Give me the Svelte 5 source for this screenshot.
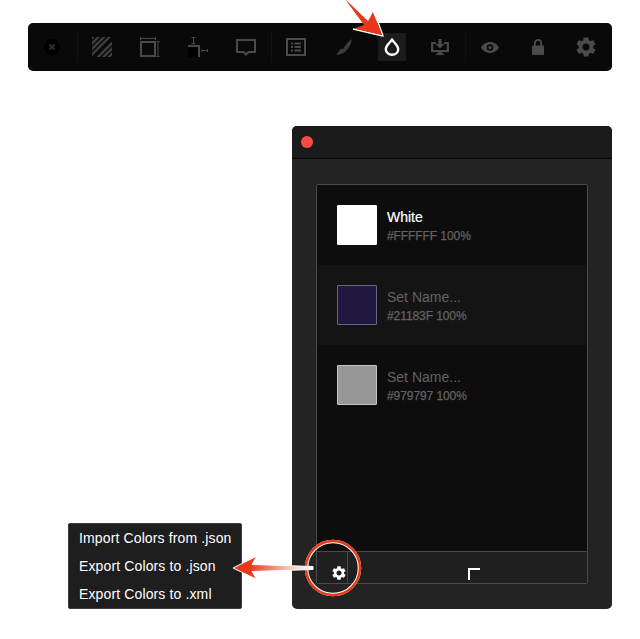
<script>
  const gear = "M19.14 12.94c.04-.3.06-.61.06-.94 0-.32-.02-.64-.07-.94l2.03-1.58c.18-.14.23-.41.12-.61l-1.92-3.32c-.12-.22-.37-.29-.59-.22l-2.39.96c-.5-.38-1.03-.7-1.62-.94l-.36-2.54c-.04-.24-.24-.41-.48-.41h-3.84c-.24 0-.43.17-.47.41l-.36 2.54c-.59.24-1.13.57-1.62.94l-2.39-.96c-.22-.08-.47 0-.59.22L2.74 8.87c-.12.21-.08.47.12.61l2.03 1.58c-.05.3-.09.63-.09.94s.02.64.07.94l-2.03 1.58c-.18.14-.23.41-.12.61l1.92 3.32c.12.22.37.29.59.22l2.39-.96c.5.38 1.03.7 1.62.94l.36 2.54c.05.24.24.41.48.41h3.84c.24 0 .44-.17.47-.41l.36-2.54c.59-.24 1.13-.56 1.62-.94l2.39.96c.22.08.47 0 .59-.22l1.92-3.32c.12-.22.07-.47-.12-.61l-2.01-1.58zM12 15.6c-1.98 0-3.6-1.62-3.6-3.6s1.62-3.6 3.6-3.6 3.6 1.62 3.6 3.6-1.62 3.6-3.6 3.6z";
  const colors = [
    { name: "White", named: true, hex: "#FFFFFF", pct: "100%", border: "#ffffff" },
    { name: "Set Name...", named: false, hex: "#21183F", pct: "100%", border: "#6a6480" },
    { name: "Set Name...", named: false, hex: "#979797", pct: "100%", border: "#c4c4c4" }
  ];
  const menu = ["Import Colors from .json", "Export Colors to .json", "Export Colors to .xml"];
</script>

<div class="page">
  <div class="toolbar">
    <div class="tool">
      <svg width="16" height="16" viewBox="0 0 16 16"><circle cx="8" cy="8" r="8" fill="#000"/><path d="M5.500 5.500l5 5M10.500 5.500l-5 5" stroke="#2e2e2e" stroke-width="2"/></svg>
    </div>
    <div class="sep"></div>
    <div class="tool">
      <svg width="20" height="20" viewBox="0 0 20 20">
        <defs><clipPath id="sq"><rect width="20" height="20"/></clipPath></defs>
        <g clip-path="url(#sq)" stroke="#3e3e3e" stroke-width="2.400">
          <path d="M-3 4L4 -3M-3 9.500L9.500 -3M-3 15L15 -3M-3 20.500L20.500 -3M2 24L24 2M7.500 24L24 7.500M13 24L24 13M18.500 24L24 18.500"/>
        </g>
      </svg>
    </div>
    <div class="tool">
      <svg width="20" height="20" viewBox="0 0 20 20" fill="none" stroke="#4a4a4a">
        <rect x="1" y="5" width="14" height="14" stroke-width="2"/>
        <path d="M.5 0V3M.5 1.500H15.500M15.500 0V3M16.500 4.500H19.500M18 4.500V19.500M16.500 19.500H19.500"/>
      </svg>
    </div>
    <div class="tool">
      <svg width="20" height="20" viewBox="0 0 20 20" fill="none" stroke="#4a4a4a">
        <rect x="0" y="8" width="11" height="12" fill="#000" stroke="none"/>
        <path d="M0 9H11V20" stroke-width="2"/>
        <path d="M3.500 .5H7.500M5.500 .5V6.500M3.500 6.500H7.500M14 12V15M14 13.500H19.500M19.500 12V15"/>
      </svg>
    </div>
    <div class="tool">
      <svg width="20" height="17" viewBox="0 0 20 17" fill="none" stroke="#4a4a4a" stroke-width="2">
        <path d="M1 1H19V13H12.500L10 15.500L7.500 13H1Z"/>
      </svg>
    </div>
    <div class="sep"></div>
    <div class="tool">
      <svg width="20" height="18" viewBox="0 0 20 18" fill="none" stroke="#4a4a4a">
        <rect x="1" y="1" width="18" height="16" stroke-width="2"/>
        <path d="M5 5.500H7M5 9H7M5 12.500H7M8.500 5.500H15M8.500 9H15M8.500 12.500H15" stroke-width="1.800"/>
      </svg>
    </div>
    <div class="tool">
      <svg width="16" height="16" viewBox="0 0 16 16" fill="#3c3c3c"><path d="M15.500 0C15.500 5 12.500 10.500 8 13.500C5.500 15 2.500 16 0 16C1.500 14 3.500 11.500 5 9.500L7 10.500C8.500 7 12 2.500 15.500 0Z"/></svg>
    </div>
    <div class="tool active">
      <svg width="16" height="18" viewBox="0 0 16 18" fill="none" stroke="#fff" stroke-width="2.400"><path d="M8 1.800C6.500 4 1.800 7.400 1.800 11.200C1.800 14.400 4.500 16.700 8 16.700C11.500 16.700 14.200 14.400 14.200 11.200C14.200 7.400 9.500 4 8 1.800Z"/></svg>
    </div>
    <div class="tool">
      <svg width="18" height="16" viewBox="0 0 18 16" fill="#4a4a4a"><path d="M1 3H5V5H2.200V11H15.800V5H13V3H17C17.600 3 18 3.400 18 4V12C18 12.600 17.600 13 17 13H11V14.500H13V16H5V14.500H7V13H1C.4 13 0 12.600 0 12V4C0 3.400.4 3 1 3Z"/><path d="M7.500 0H10.500V5H13.500L9 9.500L4.500 5H7.500Z"/></svg>
    </div>
    <div class="sep"></div>
    <div class="tool">
      <svg width="18" height="11" viewBox="0 0 18 11"><path fill="#4a4a4a" fill-rule="evenodd" d="M9 0C13 0 16.500 2.500 18 5.500C16.500 8.500 13 11 9 11C5 11 1.500 8.500 0 5.500C1.500 2.500 5 0 9 0ZM9 2.200A3.300 3.300 0 1 0 9 8.800A3.300 3.300 0 1 0 9 2.200Z"/><circle cx="9" cy="5.500" r="1.600" fill="#4a4a4a"/></svg>
    </div>
    <div class="tool">
      <svg width="12" height="16" viewBox="0 0 12 16"><rect y="6.500" width="12" height="9.500" rx="1" fill="#4a4a4a"/><path d="M2.800 7V4.200A3.200 3.200 0 0 1 9.200 4.200V7" fill="none" stroke="#4a4a4a" stroke-width="1.800"/></svg>
    </div>
    <div class="tool">
      <svg width="20" height="20" viewBox="2 2 20 20"><path fill="#4a4a4a" d={gear}/></svg>
    </div>
  </div>

  <div class="panel">
    <div class="titlebar"><span class="dot"></span></div>
    <div class="body">
      <div class="box">
        <div class="list">
          {#each colors as c}
            <div class="row">
              <div class="swatch" style="background:{c.hex};border-color:{c.border}"></div>
              <div class="info">
                <div class="name" class:named={c.named}>{c.name}</div>
                <div class="meta">{c.hex} {c.pct}</div>
              </div>
            </div>
          {/each}
        </div>
        <div class="footer">
          <div class="cell">
            <svg width="14" height="14" viewBox="2 2 20 20"><path fill="#fff" d={gear}/></svg>
          </div>
          <div class="resize"><span class="corner"></span></div>
        </div>
      </div>
    </div>
  </div>

  <div class="menu">
    {#each menu as m}<div class="item">{m}</div>{/each}
  </div>

  <svg class="notes" width="640" height="639" viewBox="0 0 640 639">
    <defs>
      <linearGradient id="tail" x1="313" y1="0" x2="250" y2="0" gradientUnits="userSpaceOnUse">
        <stop offset="0" stop-color="#fff"/>
        <stop offset="0.45" stop-color="#f3b8a8"/>
        <stop offset="1" stop-color="#e8381a"/>
      </linearGradient>
    </defs>
    <path d="M353 29L383 36L374 11" fill="none" stroke="#fff" stroke-width="1.500" stroke-linejoin="round"/>
    <path d="M345 -1L368 21L373 12L382 35L354 28.500L364 25Z" fill="#e8381a"/>
    <circle cx="333" cy="568" r="26.500" fill="none" stroke="#fff" stroke-width="3.500"/>
    <circle cx="333" cy="568" r="27" fill="none" stroke="#e8381a" stroke-width="2.500"/>
    <path d="M313 566.500V569.500L252 571.500L257 579.500L233 568L257 556L252 564.500Z" fill="url(#tail)" stroke="#fff" stroke-width="1" stroke-linejoin="round"/>
  </svg>
</div>

<style>
  :global(body) {
    margin: 0;
    background: #fff;
    font-family: "Liberation Sans", Arial, sans-serif;
  }
  .page {
    position: relative;
    width: 640px;
    height: 639px;
    padding-top: 23px;
    box-sizing: border-box;
    overflow: hidden;
  }
  .toolbar {
    display: flex;
    align-items: stretch;
    margin-left: 28px;
    width: 584px;
    height: 48px;
    background: #090909;
    border-radius: 5px;
  }
  .tool {
    width: 48px;
    display: flex;
    align-items: center;
    justify-content: center;
    position: relative;
  }
  .tool.active::before {
    content: "";
    position: absolute;
    left: 10px;
    top: 10px;
    width: 28px;
    height: 28px;
    background: #1b1b1b;
  }
  .tool svg { position: relative; }
  .sep {
    width: 2px;
    display: flex;
    background: linear-gradient(#111, #111) center / 1px 32px no-repeat;
  }
  .panel {
    margin-left: 292px;
    margin-top: 55px;
    width: 320px;
    height: 483px;
    background: #232323;
    border-radius: 5px;
    display: flex;
    flex-direction: column;
    overflow: hidden;
  }
  .titlebar {
    height: 32px;
    background: #1b1b1b;
    border-bottom: 1px solid #090909;
    display: flex;
    align-items: center;
    padding-left: 9px;
    flex: none;
  }
  .dot {
    width: 12px;
    height: 12px;
    border-radius: 50%;
    background: #fc4b46;
  }
  .body {
    padding: 25px 24px;
    flex: 1;
    display: flex;
    min-height: 0;
  }
  .box {
    flex: 1;
    border: 1px solid #4a4a4a;
    border-radius: 2px;
    display: flex;
    flex-direction: column;
    background: #0d0d0d;
  }
  .list { flex: 1; }
  .row {
    height: 80px;
    display: flex;
    align-items: center;
    padding-left: 20px;
    gap: 10px;
  }
  .row:nth-child(even) { background: #141414; }
  .swatch {
    width: 40px;
    height: 40px;
    box-sizing: border-box;
    border: 1px solid;
    border-radius: 1px;
  }
  .info {
    display: flex;
    flex-direction: column;
    gap: 4px;
    padding-top: 1px;
  }
  .name {
    font-size: 14px;
    line-height: 16px;
    color: #636363;
  }
  .name.named {
    color: #fff;
    -webkit-text-stroke: 0.2px #fff;
  }
  .meta {
    font-size: 12px;
    line-height: 14px;
    color: #626262;
    letter-spacing: -0.08px;
    -webkit-text-stroke: 0.25px #626262;
  }
  .footer {
    height: 31px;
    border-top: 1px solid #4a4a4a;
    background: #1f1f1f;
    display: flex;
    flex: none;
  }
  .cell {
    width: 31px;
    border-right: 1px solid #4a4a4a;
    display: flex;
    align-items: flex-end;
    justify-content: flex-end;
    padding: 0 1px 3px 0;
    box-sizing: border-box;
  }
  .resize {
    flex: 1;
    display: flex;
    justify-content: center;
    padding: 16px 0 0 13px;
    box-sizing: border-box;
  }
  .corner {
    width: 10px;
    height: 10px;
    border-left: 2px solid #fff;
    border-top: 2px solid #fff;
  }
  .menu {
    position: absolute;
    left: 68px;
    top: 523px;
    width: 174px;
    height: 86px;
    box-sizing: border-box;
    background: #1e1e1e;
    border: 1px solid #3c3c3c;
    border-radius: 2px;
    padding: 1px 0;
  }
  .item {
    height: 28px;
    line-height: 27px;
    padding-left: 10px;
    font-size: 14px;
    letter-spacing: 0.13px;
    color: #fff;
    white-space: nowrap;
  }
  .notes {
    position: absolute;
    left: 0;
    top: 0;
    pointer-events: none;
  }
</style>
